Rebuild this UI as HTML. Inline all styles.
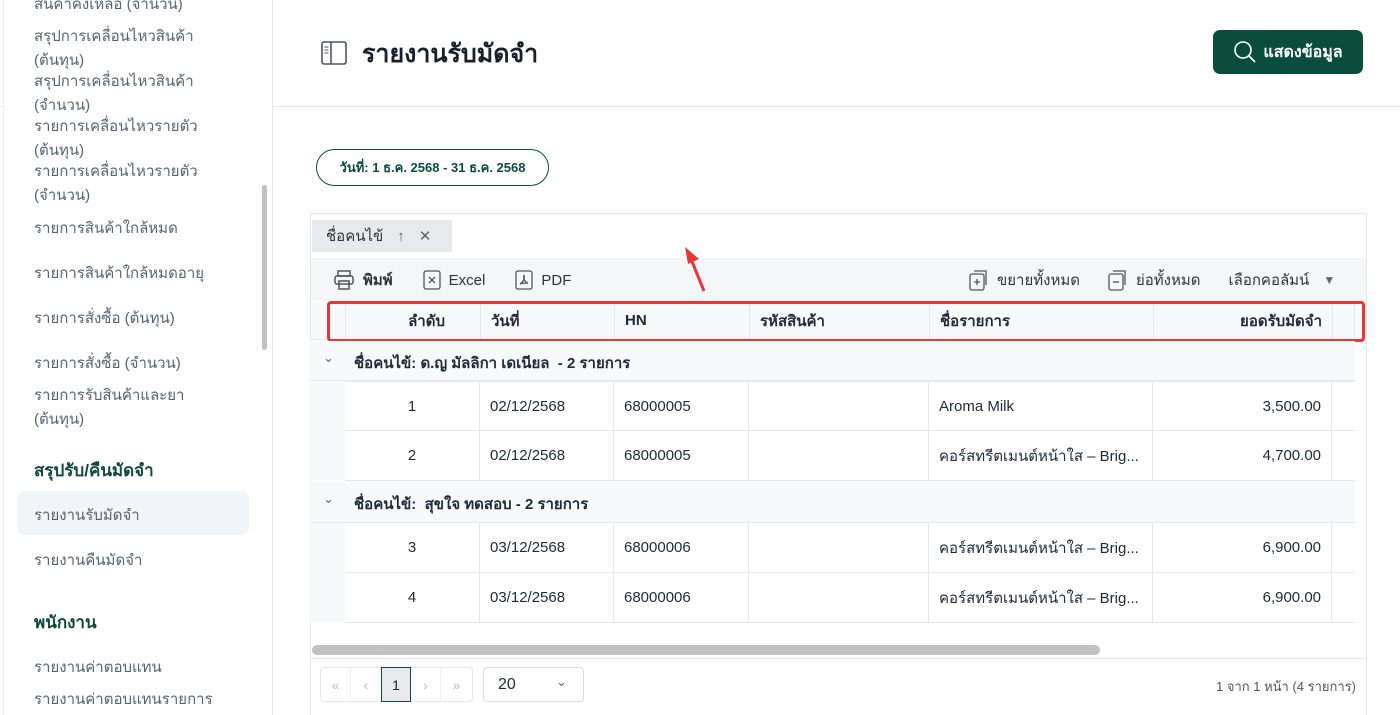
<!DOCTYPE html>
<html><head><meta charset="utf-8"><style>
*{box-sizing:border-box;margin:0;padding:0}
body{width:1400px;height:715px;overflow:hidden;background:#fff;font-family:"Liberation Sans","Noto Sans CJK SC",sans-serif;color:#1f2937;position:relative}
.a{position:absolute;white-space:nowrap}
.sb{color:#5b6170;font-size:15px}
.sh{color:#0f4a3a;font-size:17px;font-weight:bold}
.cell{position:absolute;border-right:1px solid #e5e7eb;height:100%;top:0;font-size:15px;display:flex;align-items:center;padding:0 10px}
.row{position:absolute;left:345px;width:1010px;border-bottom:1px solid #e5e7eb;background:#fff}
.grp{position:absolute;left:310px;width:1045px;background:#f8f9fb;border-bottom:1px solid #e5e7eb;font-weight:bold;font-size:15px}
.tb{font-size:15px;color:#333;display:flex;align-items:center;gap:8px}
</style></head><body>
<div class="a" style="left:3px;top:0;width:1px;height:715px;background:#eceef2"></div>
<div class="a" style="left:272px;top:0;width:1px;height:715px;background:#e5e7eb"></div>
<div class="a" style="left:0;top:106px;width:3px;height:1px;background:#e5e7eb"></div>
<div class="a" style="left:262px;top:185px;width:5px;height:165px;background:#c1c1c1;border-radius:3px"></div>
<div class="a sb" style="left:34px;top:-8px">สินค้าคงเหลือ (จำนวน)</div>
<div class="a sb" style="left:34px;top:24px">สรุปการเคลื่อนไหวสินค้า</div>
<div class="a sb" style="left:34px;top:48px">(ต้นทุน)</div>
<div class="a sb" style="left:34px;top:69px">สรุปการเคลื่อนไหวสินค้า</div>
<div class="a sb" style="left:34px;top:93px">(จำนวน)</div>
<div class="a sb" style="left:34px;top:114px">รายการเคลื่อนไหวรายตัว</div>
<div class="a sb" style="left:34px;top:138px">(ต้นทุน)</div>
<div class="a sb" style="left:34px;top:159px">รายการเคลื่อนไหวรายตัว</div>
<div class="a sb" style="left:34px;top:183px">(จำนวน)</div>
<div class="a sb" style="left:34px;top:216px">รายการสินค้าใกล้หมด</div>
<div class="a sb" style="left:34px;top:261px">รายการสินค้าใกล้หมดอายุ</div>
<div class="a sb" style="left:34px;top:306px">รายการสั่งซื้อ (ต้นทุน)</div>
<div class="a sb" style="left:34px;top:351px">รายการสั่งซื้อ (จำนวน)</div>
<div class="a sb" style="left:34px;top:383px">รายการรับสินค้าและยา</div>
<div class="a sb" style="left:34px;top:407px">(ต้นทุน)</div>
<div class="a sh" style="left:34px;top:457px">สรุปรับ/คืนมัดจำ</div>
<div class="a" style="left:17px;top:491px;width:232px;height:44px;background:#f1f4f8;border-radius:8px"></div>
<div class="a sb" style="left:34px;top:503px">รายงานรับมัดจำ</div>
<div class="a sb" style="left:34px;top:548px">รายงานคืนมัดจำ</div>
<div class="a sh" style="left:34px;top:609px">พนักงาน</div>
<div class="a sb" style="left:34px;top:655px">รายงานค่าตอบแทน</div>
<div class="a sb" style="left:34px;top:687px">รายงานค่าตอบแทนรายการ</div>
<div class="a" style="left:273px;top:106px;width:1127px;height:1px;background:#e5e7eb"></div>
<svg class="a" style="left:321px;top:41px" width="26" height="24" viewBox="0 0 26 24"><rect x="1" y="1" width="24" height="22" rx="2" fill="none" stroke="#4b5563" stroke-width="1.6"/><line x1="10" y1="1" x2="10" y2="23" stroke="#4b5563" stroke-width="1.6"/><line x1="3.5" y1="6" x2="7.5" y2="6" stroke="#4b5563"/><line x1="3.5" y1="9" x2="7.5" y2="9" stroke="#4b5563"/><line x1="3.5" y1="12" x2="7.5" y2="12" stroke="#4b5563"/></svg>
<div class="a" style="left:362px;top:34px;font-size:25px;font-weight:bold;color:#1a1f2b">รายงานรับมัดจำ</div>
<div class="a" style="left:1213px;top:30px;width:150px;height:44px;background:#0b4d3d;border-radius:7px;color:#fff;font-weight:bold;font-size:16px;display:flex;align-items:center;justify-content:center;gap:6px">
<svg width="24" height="24" viewBox="0 0 24 24"><circle cx="10" cy="10" r="8" fill="none" stroke="#fff" stroke-width="1.6"/><line x1="15.8" y1="15.8" x2="22" y2="22" stroke="#fff" stroke-width="1.8"/></svg>แสดงข้อมูล</div>
<div class="a" style="left:316px;top:149px;width:233px;height:37px;border:1.5px solid #0b4d3d;border-radius:19px;color:#0b4d3d;font-weight:bold;font-size:13px;display:flex;align-items:center;justify-content:center">วันที่: 1 ธ.ค. 2568 - 31 ธ.ค. 2568</div>
<div class="a" style="left:310px;top:213px;width:1057px;height:502px;border:1px solid #e5e7eb;border-bottom:none"></div>
<div class="a" style="left:312px;top:220px;width:140px;height:32px;background:#e8e9ec;font-size:15px;color:#333;display:flex;align-items:center;padding-left:14px;gap:14px">ชื่อคนไข้ <span style="color:#666">↑</span><span style="color:#666">✕</span></div>
<div class="a" style="left:311px;top:258px;width:1055px;height:43px;background:#f5f6f7"></div>
<div class="a tb" style="left:333px;top:268px">
<svg width="22" height="22" viewBox="0 0 22 22" fill="none" stroke="#555" stroke-width="1.5"><rect x="5" y="2" width="12" height="5"/><rect x="2" y="7" width="18" height="8" rx="2"/><rect x="6" y="12" width="10" height="8"/></svg><b>พิมพ์</b>
<span style="width:14px"></span>
<svg width="18" height="20" viewBox="0 0 18 20" fill="none" stroke="#555" stroke-width="1.3"><rect x="1" y="1" width="16" height="18" rx="2"/><path d="M6 7l6 6M12 7l-6 6"/></svg>Excel
<span style="width:14px"></span>
<svg width="18" height="20" viewBox="0 0 18 20" fill="none" stroke="#555" stroke-width="1.3"><rect x="1" y="1" width="16" height="18" rx="2"/><path d="M5 14c3-2 5-5 4-9-1 4 1 7 4 8-3 0-6 0-8 1z"/></svg>PDF</div>
<div class="a tb" style="left:969px;top:268px">
<svg width="20" height="22" viewBox="0 0 20 22" fill="none" stroke="#555" stroke-width="1.3"><rect x="1" y="5" width="14" height="16" rx="2"/><path d="M5 2h12v14"/><path d="M8 10v6M5 13h6"/></svg>ขยายทั้งหมด
<span style="width:12px"></span>
<svg width="20" height="22" viewBox="0 0 20 22" fill="none" stroke="#555" stroke-width="1.3"><rect x="1" y="5" width="14" height="16" rx="2"/><path d="M5 2h12v14"/><path d="M5 13h6"/></svg>ย่อทั้งหมด
<span style="width:12px"></span>เลือกคอลัมน์ <span style="color:#666;font-size:12px;margin-left:6px">▼</span></div>
<div class="a" style="left:311px;top:302px;width:1055px;height:38px;background:#f8f9fb;border-bottom:1px solid #e5e7eb">
<div class="cell" style="left:0;width:35px"></div>
<div class="cell" style="left:35px;width:135px;justify-content:flex-end;padding-right:35px;font-weight:bold">ลำดับ</div>
<div class="cell" style="left:170px;width:134px;font-weight:bold">วันที่</div>
<div class="cell" style="left:304px;width:135px;font-weight:bold">HN</div>
<div class="cell" style="left:439px;width:180px;font-weight:bold">รหัสสินค้า</div>
<div class="cell" style="left:619px;width:224px;font-weight:bold">ชื่อรายการ</div>
<div class="cell" style="left:843px;width:179px;justify-content:flex-end;font-weight:bold">ยอดรับมัดจำ</div>
<div class="cell" style="left:1022px;width:22px"></div>
</div>
<div class="a" style="left:327px;top:301px;width:1038px;height:41px;border:3px solid #e53935;border-radius:4px"></div>
<div class="grp" style="top:341px;height:40px"><span class="a" style="left:13px;top:9px;font-weight:normal;color:#666;font-size:13px">⌄</span><span class="a" style="left:44px;top:10px">ชื่อคนไข้: ด.ญ มัลลิกา เดเนียล &nbsp;- 2 รายการ</span></div>
<div class="a" style="left:310px;top:381px;width:35px;height:99px;background:#f8f9fb"></div>
<div class="row" style="top:381px;height:50px;border-top:1px solid #e5e7eb">
<div class="cell" style="left:0;width:135px;justify-content:center">1</div>
<div class="cell" style="left:135px;width:134px">02/12/2568</div>
<div class="cell" style="left:269px;width:135px">68000005</div>
<div class="cell" style="left:404px;width:180px"></div>
<div class="cell" style="left:584px;width:224px">Aroma Milk</div>
<div class="cell" style="left:808px;width:179px;justify-content:flex-end">3,500.00</div></div>
<div class="row" style="top:431px;height:50px">
<div class="cell" style="left:0;width:135px;justify-content:center">2</div>
<div class="cell" style="left:135px;width:134px">02/12/2568</div>
<div class="cell" style="left:269px;width:135px">68000005</div>
<div class="cell" style="left:404px;width:180px"></div>
<div class="cell" style="left:584px;width:224px">คอร์สทรีตเมนต์หน้าใส – Brig...</div>
<div class="cell" style="left:808px;width:179px;justify-content:flex-end">4,700.00</div></div>
<div class="grp" style="top:481px;height:42px"><span class="a" style="left:13px;top:10px;font-weight:normal;color:#666;font-size:13px">⌄</span><span class="a" style="left:44px;top:11px">ชื่อคนไข้: &nbsp;สุขใจ ทดสอบ - 2 รายการ</span></div>
<div class="a" style="left:310px;top:523px;width:35px;height:99px;background:#f8f9fb"></div>
<div class="row" style="top:523px;height:50px">
<div class="cell" style="left:0;width:135px;justify-content:center">3</div>
<div class="cell" style="left:135px;width:134px">03/12/2568</div>
<div class="cell" style="left:269px;width:135px">68000006</div>
<div class="cell" style="left:404px;width:180px"></div>
<div class="cell" style="left:584px;width:224px">คอร์สทรีตเมนต์หน้าใส – Brig...</div>
<div class="cell" style="left:808px;width:179px;justify-content:flex-end">6,900.00</div></div>
<div class="row" style="top:573px;height:50px">
<div class="cell" style="left:0;width:135px;justify-content:center">4</div>
<div class="cell" style="left:135px;width:134px">03/12/2568</div>
<div class="cell" style="left:269px;width:135px">68000006</div>
<div class="cell" style="left:404px;width:180px"></div>
<div class="cell" style="left:584px;width:224px">คอร์สทรีตเมนต์หน้าใส – Brig...</div>
<div class="cell" style="left:808px;width:179px;justify-content:flex-end">6,900.00</div></div>
<div class="a" style="left:312px;top:645px;width:788px;height:10px;background:#c1c1c1;border-radius:5px"></div>
<div class="a" style="left:311px;top:658px;width:1055px;height:1px;background:#e5e7eb"></div>
<div class="a" style="left:320px;top:667px;width:153px;height:35px;border:1px solid #e5e7eb;border-radius:4px;display:flex;color:#bbb;font-size:14px">
<div style="width:30px;display:flex;align-items:center;justify-content:center;border-right:1px solid #f0f0f0">«</div>
<div style="width:30px;display:flex;align-items:center;justify-content:center">‹</div>
<div style="width:30px;display:flex;align-items:center;justify-content:center;background:#e8e9ec;border:1.5px solid #0b4d3d;color:#222;margin:-1px 0">1</div>
<div style="width:30px;display:flex;align-items:center;justify-content:center;border-right:1px solid #f0f0f0">›</div>
<div style="width:31px;display:flex;align-items:center;justify-content:center">»</div></div>
<div class="a" style="left:483px;top:667px;width:101px;height:35px;border:1px solid #ddd;border-radius:4px;font-size:16px;display:flex;align-items:center;padding-left:14px">20<span style="position:absolute;left:72px;top:6px;color:#666;font-size:13px">⌄</span></div>
<div class="a" style="right:44px;top:676px;font-size:13px;color:#555">1 จาก 1 หน้า (4 รายการ)</div>
<svg class="a" style="left:680px;top:244px" width="30" height="50" viewBox="0 0 30 50"><line x1="24" y1="47" x2="11" y2="15" stroke="#e53935" stroke-width="3"/><path d="M5 3L19 15L8 20Z" fill="#e53935"/></svg>
</body></html>
